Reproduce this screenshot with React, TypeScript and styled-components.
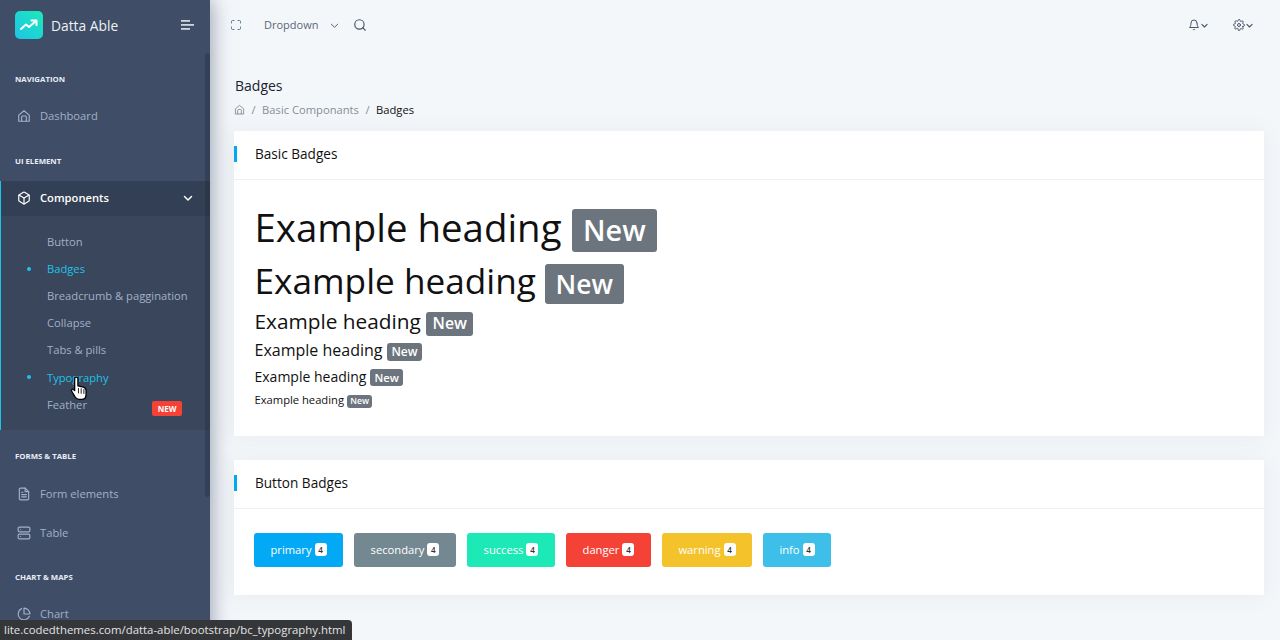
import React from "react";
import styled, { createGlobalStyle } from "styled-components";

const Global = createGlobalStyle`
  html, body { margin: 0; padding: 0; height: 640px; overflow: hidden; background: #f4f7fa; }
  body { font-family: "Open Sans", "Liberation Sans", sans-serif; font-size: 14px; color: #111; }
  * { box-sizing: border-box; }
`;

const Page = styled.div`
  display: flex;
  width: 1280px;
  height: 640px;
  overflow: hidden;
  position: relative;
  background: #f4f7fa;
`;
const Sidebar = styled.aside`
  width: 210px;
  height: 640px;
  flex: none;
  background: #3f4d67;
  box-shadow: 1px 0 20px 0 rgba(63, 77, 103, 0.55);
  position: relative;
  overflow: hidden;
  z-index: 2;
`;
const Scrollbar = styled.div`
  position: absolute;
  right: 0;
  top: 53px;
  width: 5px;
  height: 444px;
  border-radius: 3px;
  background: rgba(30, 40, 55, 0.33);
`;
const Brand = styled.div`
  height: 50px;
  display: flex;
  align-items: center;
  padding: 0 16px 0 15px;
  color: #fff;
`;
const Logo = styled.div`
  width: 28px;
  height: 28px;
  border-radius: 5px;
  background: linear-gradient(-135deg, #1de9b6 0%, #1dc4e9 100%);
  display: flex;
  align-items: center;
  justify-content: center;
`;
const BrandName = styled.span`
  font-size: 13.8px;
  margin-left: 8px;
  flex: 1;
  color: #eef1f5;
`;
const MenuBtn = styled.svg`
  width: 13px;
  height: 10px;
`;
const Caption = styled.div<{ $top: number }>`
  margin-top: ${(p) => p.$top}px;
  padding-left: 15px;
  font-size: 7.8px;
  line-height: 14px;
  font-weight: 700;
  color: #e8edf7;
  text-transform: uppercase;
`;
const Item = styled.div<{ $top: number; $active?: boolean }>`
  margin-top: ${(p) => p.$top}px;
  height: 35px;
  display: flex;
  align-items: center;
  font-size: 11.2px;
  color: ${(p) => (p.$active ? "#fff" : "#a3b0c8")};
  font-weight: ${(p) => (p.$active ? 600 : 400)};
  background: ${(p) => (p.$active ? "#333f54" : "transparent")};
  border-left: ${(p) => (p.$active ? "1px solid #1dc4e9" : "0")};
  padding-left: ${(p) => (p.$active ? "16px" : "17px")};
  padding-bottom: ${(p) => (p.$active ? "2px" : "0")};
  svg { width: 14px; height: 14px; flex: none; margin-right: 9px; }
`;
const Chevron = styled.span`
  margin-left: auto;
  margin-right: 16px;
  display: flex;
  svg { width: 12px; height: 12px; margin: 0; }
`;
const Sub = styled.div`
  height: 214px;
  padding-top: 12px;
  background: #39465c;
  border-left: 1px solid #1dc4e9;
`;
const SubItem = styled.div<{ $on?: boolean }>`
  height: 27.1px;
  display: flex;
  align-items: center;
  padding-left: 46px;
  font-size: 11.2px;
  position: relative;
  color: ${(p) => (p.$on ? "#1dc4e9" : "#a3b0c8")};
  &::before {
    content: "";
    display: ${(p) => (p.$on ? "block" : "none")};
    position: absolute;
    left: 26px;
    top: 12px;
    width: 4px;
    height: 4px;
    border-radius: 50%;
    background: #1dc4e9;
  }
`;
const NewTag = styled.span`
  position: absolute;
  left: 151px;
  top: 10px;
  width: 30px;
  height: 15px;
  background: #f44236;
  color: #fff;
  border-radius: 2px;
  font-size: 8px;
  font-weight: 700;
  display: flex;
  align-items: center;
  justify-content: center;
`;
const Hand = styled.svg`
  position: absolute;
  left: 69px;
  top: 13px;
  width: 18px;
  height: 25px;
  z-index: 3;
`;
const Main = styled.main`
  flex: 1;
  min-width: 0;
  display: flex;
  flex-direction: column;
  padding-left: 24px;
  padding-right: 16px;
`;
const Top = styled.header`
  height: 50px;
  display: flex;
  align-items: center;
  color: #4a5568;
  font-size: 11px;
  flex: none;
  margin-left: -4px;
`;
const TopText = styled.span`
  margin-left: 22px;
  margin-bottom: 2px;
  color: #5a6679;
`;
const Spacer = styled.div`flex: 1;`;
const TopGroup = styled.span<{ $right?: number; $left?: number }>`
  display: flex;
  align-items: center;
  margin-right: ${(p) => p.$right ?? 0}px;
  margin-left: ${(p) => p.$left ?? 0}px;
`;
const Crumb = styled.div`
  margin-top: 26px;
  height: 55px;
  padding-left: 1px;
`;
const PageTitle = styled.div`
  font-size: 14px;
  line-height: 20px;
  color: #1a2330;
`;
const CrumbRow = styled.div`
  display: flex;
  align-items: center;
  margin: 3px 0 0 -1px;
  height: 20px;
  font-size: 11.2px;
  color: #868e96;
`;
const CrumbPart = styled.span`
  display: flex;
  margin-right: 6.5px;
`;
const CrumbNow = styled.span`
  color: #111;
  font-weight: 500;
`;
const Card = styled.section<{ $h: number }>`
  background: #fff;
  height: ${(p) => p.$h}px;
  margin-bottom: 24px;
  box-shadow: 0 1px 20px 0 rgba(69, 90, 100, 0.08);
  flex: none;
`;
const CardHead = styled.div`
  height: 49px;
  border-bottom: 1px solid #f1f1f1;
  display: flex;
  align-items: center;
  padding: 0 0 3px 21px;
  position: relative;
  font-size: 13.6px;
  color: #111;
  &::before {
    content: "";
    position: absolute;
    left: 0;
    top: 15px;
    width: 3px;
    height: 16px;
    background: #04a9f5;
  }
`;
const Body = styled.div<{ $top: number }>`
  padding: ${(p) => p.$top}px 20px 0;
`;
const Head = styled.div<{ $size: number; $h: number }>`
  font-size: ${(p) => p.$size}px;
  height: ${(p) => p.$h}px;
  line-height: ${(p) => p.$h}px;
  color: #111;
  white-space: nowrap;
  padding-left: 0.5px;
`;
const Badge = styled.span<{ $size: number; $lift: number }>`
  display: inline-block;
  font-size: ${(p) => p.$size}px;
  line-height: 1;
  padding: 0.25em 0.4em;
  background: #6c757d;
  color: #fff;
  font-weight: 600;
  border-radius: 3px;
  vertical-align: ${(p) => p.$lift}px;
`;
const BtnRow = styled.div`
  display: flex;
  gap: 11px;
`;
const Btn = styled.div<{ $c: string; $w: number }>`
  width: ${(p) => p.$w}px;
  height: 34px;
  background: ${(p) => p.$c};
  color: #fff;
  border-radius: 3px;
  font-size: 11.2px;
  display: flex;
  align-items: center;
  justify-content: center;
  padding-bottom: 1px;
`;
const Count = styled.span`
  margin-left: 3px;
  background: #fff;
  color: #333;
  font-size: 8px;
  font-weight: 600;
  width: 12px;
  height: 13px;
  border-radius: 3px;
  display: flex;
  align-items: center;
  justify-content: center;
`;
const Status = styled.div`
  position: absolute;
  left: 0;
  bottom: 0;
  height: 20px;
  width: 352px;
  background: #35363a;
  color: #e3e3e3;
  border-top-right-radius: 4px;
  font-size: 11.4px;
  line-height: 20px;
  padding-left: 4px;
  white-space: nowrap;
  z-index: 5;
`;

const I = (p: { children: React.ReactNode; size?: number; color?: string; sw?: number }) => (
  <svg width={p.size ?? 14} height={p.size ?? 14} viewBox="0 0 24 24" fill="none" stroke={p.color ?? "currentColor"} strokeWidth={p.sw ?? 2} strokeLinecap="round" strokeLinejoin="round">
    {p.children}
  </svg>
);
const HomeI = (p: { size?: number }) => (
  <I size={p.size}><path d="M3 21V10.5L12 3l9 7.5V21z" /><path d="M8 21v-7.5a1.5 1.5 0 0 1 1.5-1.5h5a1.5 1.5 0 0 1 1.5 1.5V21" /></I>
);
const ChevD = (p: { size?: number; sw?: number }) => <I size={p.size ?? 12} sw={p.sw ?? 3}><polyline points="5 9 12 16 19 9" /></I>;

const headings = [
  { s: 38.4, h: 52, b: 28.8, lift: 1 },
  { s: 35.2, h: 54, b: 26.4, lift: 0 },
  { s: 20.8, h: 29, b: 15.8, lift: 0 },
  { s: 16, h: 29, b: 12, lift: 0 },
  { s: 14, h: 24, b: 11.2, lift: 0 },
  { s: 11.2, h: 22, b: 8.6, lift: 0 },
];
const buttons: [string, string, number][] = [
  ["primary", "#04a9f5", 89],
  ["secondary", "#748892", 102],
  ["success", "#1de9b6", 88],
  ["danger", "#f44236", 85],
  ["warning", "#f4c22b", 90],
  ["info", "#3ebfea", 68],
];

export default function App() {
  return (
    <Page>
      <Global />
      <Sidebar>
        <Brand>
          <Logo>
            <svg width="18" height="12" viewBox="0 0 18 12" fill="none" stroke="#fff" strokeWidth="2" strokeLinecap="round" strokeLinejoin="round">
              <polyline points="1 10 6 5.5 9 8 16 2" />
              <polyline points="11.5 1.5 16.5 1.5 16.5 6" />
            </svg>
          </Logo>
          <BrandName>Datta Able</BrandName>
          <MenuBtn viewBox="0 0 13 10" fill="#cfd5df">
            <rect x="0" y="0" width="9" height="1.8" />
            <rect x="0" y="4" width="13" height="1.8" />
            <rect x="0" y="8" width="9" height="1.8" />
          </MenuBtn>
        </Brand>
        <Caption $top={22}>Navigation</Caption>
        <Item $top={12}><HomeI />Dashboard</Item>
        <Caption $top={21}>UI Element</Caption>
        <Item $top={13} $active>
          <I><path d="M21 16V8a2 2 0 0 0-1-1.73l-7-4a2 2 0 0 0-2 0l-7 4A2 2 0 0 0 3 8v8a2 2 0 0 0 1 1.73l7 4a2 2 0 0 0 2 0l7-4A2 2 0 0 0 21 16z" /><polyline points="3.27 6.96 12 12.01 20.73 6.96" /><line x1="12" y1="22.08" x2="12" y2="12" /></I>
          Components
          <Chevron><ChevD /></Chevron>
        </Item>
        <Sub>
          <SubItem>Button</SubItem>
          <SubItem $on>Badges</SubItem>
          <SubItem>Breadcrumb &amp; paggination</SubItem>
          <SubItem>Collapse</SubItem>
          <SubItem>Tabs &amp; pills</SubItem>
          <SubItem $on>
            Typography
            <Hand viewBox="0 0 16 23">
              <path d="M4 2.5a1.5 1.5 0 0 1 3 0V9l5 1.2c1.6.4 2.5 1.3 2.5 3V17c0 2.5-1.5 4.5-4 4.5H8c-1.5 0-2.5-.7-3.5-2L1.3 14c-.8-1.2.7-2.6 1.8-1.6L4 13.5z" fill="#fff" stroke="#000" strokeWidth="1.2" strokeLinejoin="round" />
              <path d="M7.5 11v5M10 11.3v5M12.5 12v4.5" stroke="#000" strokeWidth="0.8" fill="none" />
            </Hand>
          </SubItem>
          <SubItem>Feather<NewTag>NEW</NewTag></SubItem>
        </Sub>
        <Caption $top={19}>Forms &amp; Table</Caption>
        <Item $top={13}>
          <I><path d="M14 2H6a2 2 0 0 0-2 2v16a2 2 0 0 0 2 2h12a2 2 0 0 0 2-2V8z" /><polyline points="14 2 14 8 20 8" /><line x1="16" y1="13" x2="8" y2="13" /><line x1="16" y1="17" x2="8" y2="17" /><polyline points="10 9 9 9 8 9" /></I>
          Form elements
        </Item>
        <Item $top={4}>
          <I><rect x="2" y="2" width="20" height="8" rx="2" ry="2" /><rect x="2" y="14" width="20" height="8" rx="2" ry="2" /><line x1="6" y1="6" x2="6.01" y2="6" /><line x1="6" y1="18" x2="6.01" y2="18" /></I>
          Table
        </Item>
        <Caption $top={20}>Chart &amp; Maps</Caption>
        <Item $top={12}>
          <I><path d="M21.21 15.89A10 10 0 1 1 8 2.83" /><path d="M22 12A10 10 0 0 0 12 2v10z" /></I>
          Chart
        </Item>
        <Scrollbar />
      </Sidebar>
      <Main>
        <Top>
          <I size={12} color="#5d7f95"><path d="M8 3H5a2 2 0 0 0-2 2v3m18 0V5a2 2 0 0 0-2-2h-3m0 18h3a2 2 0 0 0 2-2v-3M3 16v3a2 2 0 0 0 2 2h3" /></I>
          <TopText>Dropdown</TopText>
          <TopGroup $left={11}><ChevD size={11} sw={2} /></TopGroup>
          <TopGroup $left={13}><I size={14}><circle cx="11" cy="11" r="8" /><line x1="21" y1="21" x2="16.65" y2="16.65" /></I></TopGroup>
          <Spacer />
          <TopGroup $right={24}><I size={12}><path d="M18 8A6 6 0 0 0 6 8c0 7-3 9-3 9h18s-3-2-3-9" /><path d="M13.73 21a2 2 0 0 1-3.46 0" /></I><ChevD size={9} /></TopGroup>
          <TopGroup $right={10}><I size={12}><circle cx="12" cy="12" r="3" /><path d="M19.4 15a1.65 1.65 0 0 0 .33 1.82l.06.06a2 2 0 0 1-2.83 2.83l-.06-.06a1.65 1.65 0 0 0-2.82 1.17V21a2 2 0 0 1-4 0v-.09A1.65 1.65 0 0 0 7 19.4l-.06.06a2 2 0 0 1-2.83-2.83l.06-.06a1.65 1.65 0 0 0-1.17-2.82H3a2 2 0 0 1 0-4h.09A1.65 1.65 0 0 0 4.6 7l-.06-.06a2 2 0 0 1 2.83-2.83l.06.06a1.65 1.65 0 0 0 2.82-1.17V3a2 2 0 0 1 4 0v.09A1.65 1.65 0 0 0 17 4.6l.06-.06a2 2 0 0 1 2.83 2.83l-.06.06a1.65 1.65 0 0 0 1.17 2.82H21a2 2 0 0 1 0 4h-.09a1.65 1.65 0 0 0-1.51 1z" /></I><ChevD size={9} /></TopGroup>
        </Top>
        <Crumb>
          <PageTitle>Badges</PageTitle>
          <CrumbRow>
            <CrumbPart><HomeI size={11} /></CrumbPart>
            <CrumbPart>/</CrumbPart>
            <CrumbPart>Basic Componants</CrumbPart>
            <CrumbPart>/</CrumbPart>
            <CrumbNow>Badges</CrumbNow>
          </CrumbRow>
        </Crumb>
        <Card $h={305}>
          <CardHead>Basic Badges</CardHead>
          <Body $top={21}>
            {headings.map((h, i) => (
              <Head key={i} $size={h.s} $h={h.h}>
                Example heading <Badge $size={h.b} $lift={h.lift}>New</Badge>
              </Head>
            ))}
          </Body>
        </Card>
        <Card $h={135}>
          <CardHead>Button Badges</CardHead>
          <Body $top={24}>
            <BtnRow>
              {buttons.map(([n, c, w]) => (
                <Btn key={n} $c={c} $w={w}>{n}<Count>4</Count></Btn>
              ))}
            </BtnRow>
          </Body>
        </Card>
      </Main>
      <Status>lite.codedthemes.com/datta-able/bootstrap/bc_typography.html</Status>
    </Page>
  );
}
